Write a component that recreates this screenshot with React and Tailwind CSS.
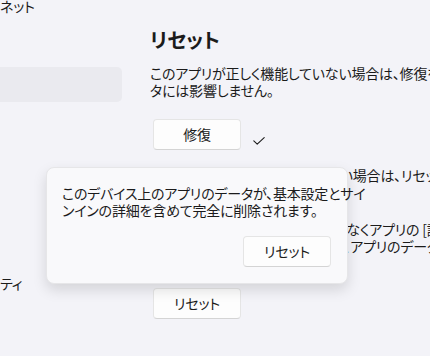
const font = { fontFamily: '"Noto Sans CJK JP", "Noto Sans", sans-serif' };

function Button({ children, className = '' }) {
  return (
    <button
      className={
        'h-[31px] w-[88px] rounded-[4px] border border-[#e5e5e5] border-b-[#d4d4d4] bg-[#fdfdfd] text-[14px] text-[#1b1b1b] ' +
        className
      }
    >
      {children}
    </button>
  );
}

function Check() {
  return (
    <svg width="12" height="8" viewBox="0 0 12 8" fill="none" className="ml-[12px] mt-[18px]">
      <path d="M0.8 3.8 L4.2 7.1 L11.2 0.6" stroke="#1b1b1b" strokeWidth="1.1" strokeLinecap="round" strokeLinejoin="round" />
    </svg>
  );
}

export default function App() {
  return (
    <div
      style={font}
      className="relative flex h-[356px] w-[430px] overflow-hidden bg-[#f3f3f8] text-[#1b1b1b] tracking-[-0.2px] [font-feature-settings:'palt']"
    >
      {/* left nav */}
      <div className="flex w-[150px] shrink-0 flex-col">
        <div className="mt-[-2px] text-[14px] leading-[17px]">ネット</div>
        <div className="mt-[52px] h-[35px] w-[122px] rounded-r-[5px] bg-[#eaeaef]" />
        <div className="mt-[173px] text-[14px] leading-[17px]">ティ</div>
      </div>

      {/* content */}
      <div className="min-w-0 flex-1 overflow-hidden pt-[27px]">
        <h2 className="text-[20px] font-semibold leading-[26px] tracking-normal">リセット</h2>
        <p className="mt-[12px] text-[14px] leading-[17px] whitespace-nowrap">
          このアプリが正しく機能していない場合は、修復を試してください。
          <br />
          タには影響しません。
        </p>
        <div className="mt-[20px] flex items-start">
          <Button className="ml-[3px]">修復</Button>
          <Check />
        </div>
        <p className="mt-[17px] text-[14px] leading-[17px] whitespace-nowrap">
          このアプリがまだ正しく機能しない場合は、リセットしてください。
          <br />
          アプリのデータが削除されます。
        </p>
        <p className="mt-[20px] text-[14px] leading-[17px] whitespace-nowrap">
          一部のアプリは、アンインストールなくアプリの [設定] ページから
          <br />
          リセットもできます。この場合には、アプリのデータが削除されます。
        </p>
        <Button className="ml-[3px] mt-[33px]">リセット</Button>
      </div>

      {/* flyout */}
      <div className="absolute left-[46px] top-[167px] flex h-[117px] w-[302px] flex-col rounded-[8px] border border-[#e6e6e8] bg-[#f9f9fb] px-[15px] pt-[17px] shadow-[0_6px_14px_rgba(0,0,0,0.13)]">
        <p className="text-[14px] leading-[17px] whitespace-nowrap">
          このデバイス上のアプリのデータが、基本設定とサイ
          <br />
          ンインの詳細を含めて完全に削除されます。
        </p>
        <div className="mt-[17px] flex justify-end">
          <Button className="mr-[1px]">リセット</Button>
        </div>
      </div>
    </div>
  );
}
